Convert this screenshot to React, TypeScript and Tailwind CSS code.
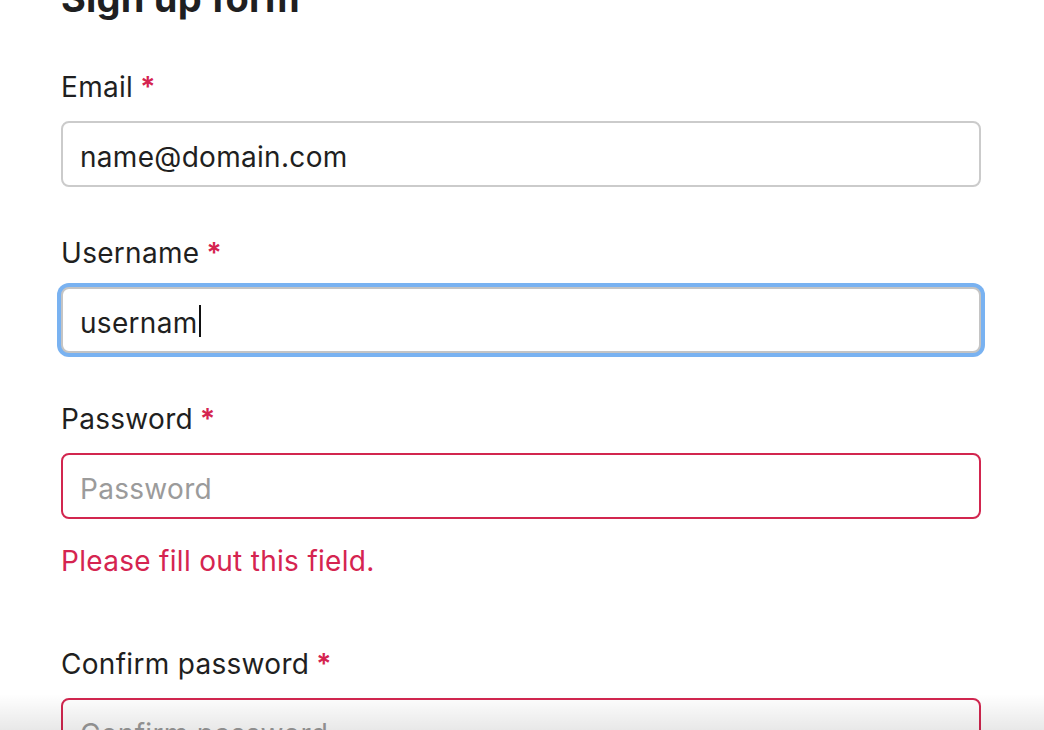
import React from "react";

const font = { fontFamily: "Inter, 'Noto Sans', 'Liberation Sans', sans-serif" };

function Label({ text }: { text: string }) {
  return (
    <div className="flex items-baseline text-[28px] leading-[32px] tracking-[0.3px] text-[#1f1f21] mb-[18px]">
      <span>{text}</span>
      <span className="ml-[7px] text-[#d52450] font-semibold">*</span>
    </div>
  );
}

export default function App() {
  return (
    <div className="relative w-[1044px] h-[730px] overflow-hidden bg-white" style={font}>
      <div className="pl-[61px] w-[981px]">
        <h1 className="mt-[-25px] text-[38px] leading-[46px] font-bold text-[#1f1f21] tracking-[0.2px]">
          Sign up form
        </h1>

        <div className="mt-[50px]">
          <Label text="Email" />
          <div className="h-[66px] w-[920px] rounded-[8px] border-2 border-[#cbcbcb] bg-white flex items-center px-[17px] pt-[5px] text-[28px] tracking-[0.3px] text-[#1f1f21]">
            name@domain.com
          </div>
        </div>

        <div className="mt-[50px]">
          <Label text="Username" />
          <div className="h-[66px] w-[920px] rounded-[8px] border-2 border-[#c4c4c4] bg-white flex items-center px-[17px] pt-[5px] text-[28px] tracking-[0.3px] text-[#1f1f21] shadow-[0_0_0_4px_#79b2f1]">
            <span>usernam</span>
            <span className="inline-block w-[2px] h-[32px] bg-[#111] ml-[1px] mb-[3px]" />
          </div>
        </div>

        <div className="mt-[50px]">
          <Label text="Password" />
          <div className="h-[66px] w-[920px] rounded-[8px] border-2 border-[#d2264f] bg-white flex items-center px-[17px] pt-[5px] text-[28px] tracking-[0.3px] text-[#9b9b9b]">
            Password
          </div>
          <div className="mt-[26px] text-[28px] leading-[32px] tracking-[0.3px] text-[#d52450]">
            Please fill out this field.
          </div>
        </div>

        <div className="mt-[71px]">
          <Label text="Confirm password" />
          <div className="h-[66px] w-[920px] rounded-[8px] border-2 border-[#d2264f] bg-white flex items-center px-[17px] pt-[5px] text-[28px] tracking-[0.3px] text-[#9b9b9b]">
            Confirm password
          </div>
        </div>
      </div>
      <div className="pointer-events-none absolute left-0 right-0 bottom-0 h-[36px] bg-gradient-to-b from-[rgba(0,0,0,0)] to-[rgba(0,0,0,0.09)]" />
    </div>
  );
}
